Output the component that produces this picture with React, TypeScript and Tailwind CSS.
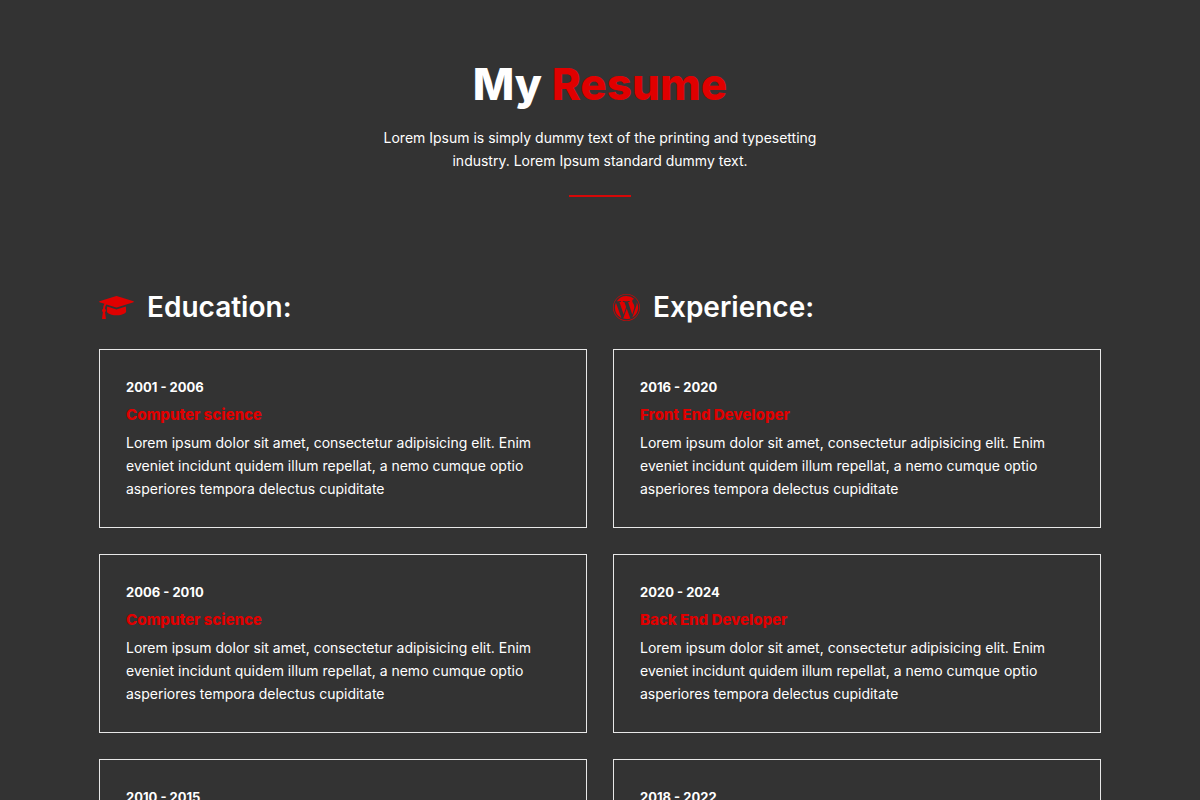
import { BsWordpress } from "react-icons/bs";
import type { ReactNode } from "react";

type Entry = { years: string; title: string };

const education: Entry[] = [
  { years: "2001 - 2006", title: "Computer science" },
  { years: "2006 - 2010", title: "Computer science" },
  { years: "2010 - 2015", title: "Computer science" },
];

const experience: Entry[] = [
  { years: "2016 - 2020", title: "Front End Developer" },
  { years: "2020 - 2024", title: "Back End Developer" },
  { years: "2018 - 2022", title: "Full Stack Developer" },
];

function GraduationCap() {
  return (
    <svg
      viewBox="0 0 2304 1792"
      className="h-[27px] w-[35px] text-[#e00000]"
      fill="currentColor"
      aria-hidden="true"
    >
      <path d="M1774 836l18 316q4 69-82 128t-235 93.500-323 34.500-323-34.500-235-93.500-82-128l18-316 574 181q22 7 48 7t48-7zM2304 512q0 23-22 31l-1120 352q-4 1-10 1t-10-1l-652-206q-43 34-71 111.500t-34 178.500q63 36 63 109 0 69-58 107l58 433q2 14-8 25-9 11-24 11h-192q-15 0-24-11-10-11-8-25l58-433q-58-38-58-107 0-73 65-111 11-207 98-330l-333-104q-22-8-22-31t22-31l1120-352q4-1 10-1t10 1l1120 352q22 8 22 31z" />
    </svg>
  );
}

function Card({ years, title }: Entry) {
  return (
    <article className="border border-[#e8e8e8] px-[26px] pt-[26px] pb-[27px]">
      <p className="text-[13px] leading-[22px] font-bold">{years}</p>
      <h3 className="mt-1.5 text-[15px] leading-[22px] font-extrabold text-[#e00000]">{title}</h3>
      <p className="mt-[5px] text-sm leading-[23px]">
        Lorem ipsum dolor sit amet, consectetur adipisicing elit. Enim eveniet incidunt quidem
        illum repellat, a nemo cumque optio asperiores tempora delectus cupiditate
      </p>
    </article>
  );
}

function Column({ icon, heading, entries }: { icon: ReactNode; heading: string; entries: Entry[] }) {
  return (
    <section>
      <h2 className="flex items-center gap-[13px] text-[28px] leading-10 font-semibold">
        {icon}
        {heading}
      </h2>
      <div className="mt-[22px] flex flex-col gap-[26px]">
        {entries.map((entry) => (
          <Card key={entry.years} {...entry} />
        ))}
      </div>
    </section>
  );
}

export default function App() {
  return (
    <div className="min-h-screen bg-[#333333] px-6 pb-20 font-['Inter',sans-serif] text-white">
      <header className="mx-auto flex max-w-[460px] flex-col items-center pt-[54px] text-center">
        <h1 className="text-[44px] leading-[60px] font-extrabold">
          My <span className="text-[#e00000]">Resume</span>
        </h1>
        <p className="mt-3 text-sm leading-[23px]">
          Lorem Ipsum is simply dummy text of the printing and typesetting industry. Lorem Ipsum
          standard dummy text.
        </p>
        <div className="mt-[23px] h-0.5 w-[62px] bg-[#d60808]" />
      </header>
      <main className="mx-auto mt-[90px] grid max-w-[1002px] gap-[26px] md:grid-cols-2">
        <Column icon={<GraduationCap />} heading="Education:" entries={education} />
        <Column
          icon={<BsWordpress className="size-[27px] text-[#e00000]" />}
          heading="Experience:"
          entries={experience}
        />
      </main>
    </div>
  );
}
